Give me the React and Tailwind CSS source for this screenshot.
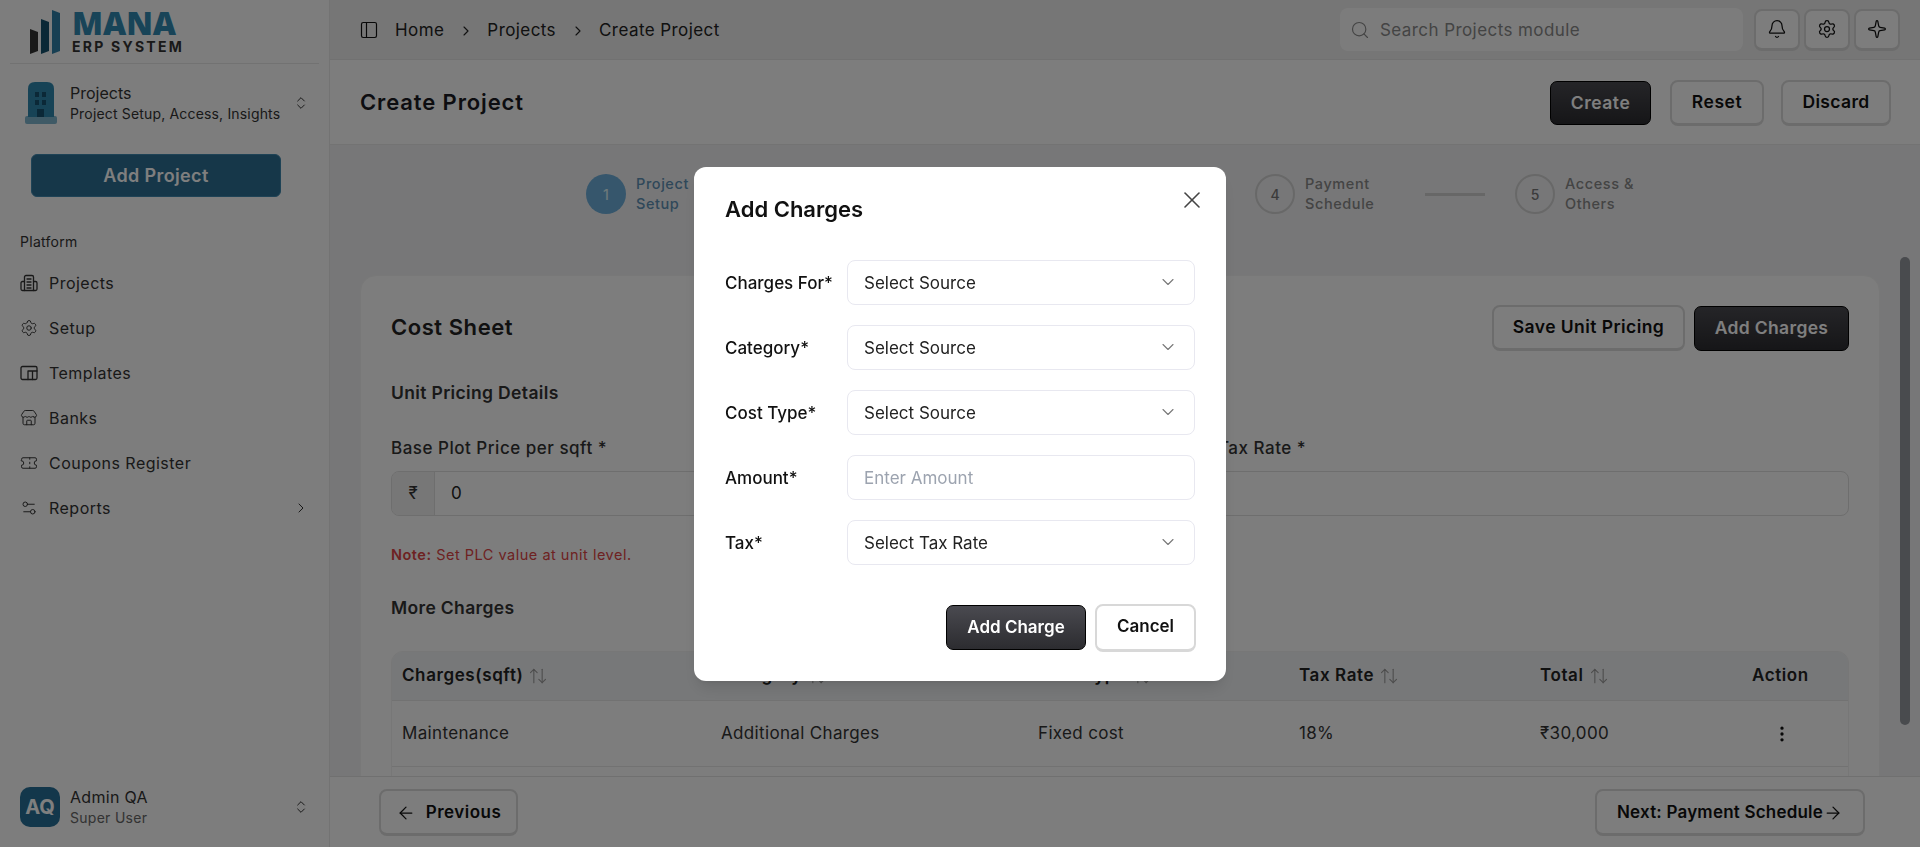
import React from "react";
import {
  PanelLeft, ChevronRight, Search, Bell, Settings, Sparkle, Store, Ticket, Settings2,
  ChevronsUpDown, ArrowLeft, ArrowRight, ArrowUpDown, EllipsisVertical, X, ChevronDown,
} from "lucide-react";

const ProjIcon = (p) => (
  <svg width="18" height="18" viewBox="0 0 18 18" fill="none" stroke="currentColor" strokeWidth="1.2" strokeLinecap="round" strokeLinejoin="round" {...p}>
    <path d="M4.5 16.5V3a1.5 1.5 0 0 1 1.5-1.5h6A1.5 1.5 0 0 1 13.5 3v13.5z" />
    <path d="M4.5 7.5H2.5A1.5 1.5 0 0 0 1 9v6a1.5 1.5 0 0 0 1.5 1.5h2M13.5 7.5h2A1.5 1.5 0 0 1 17 9v6a1.5 1.5 0 0 1-1.5 1.5h-2" />
    <path d="M7 5h4M7 8h4M7 11h4M7 14h4" />
  </svg>
);
const TemplateIcon = (p) => (
  <svg width="18" height="18" viewBox="0 0 18 18" fill="none" stroke="currentColor" strokeWidth="1.1" strokeLinecap="round" strokeLinejoin="round" {...p}>
    <rect x="1" y="2.5" width="16" height="13" rx="1.5" />
    <path d="M8 15.5V7h9M12.5 7v8.5" />
  </svg>
);

const NAV = [
  [ProjIcon, "Projects"],
  [Settings, "Setup"],
  [TemplateIcon, "Templates"],
  [Store, "Banks"],
  [Ticket, "Coupons Register"],
  [Settings2, "Reports"],
];

function Sidebar() {
  return (
    <aside className="w-[330px] shrink-0 h-full flex flex-col bg-[#fafafa] border-r border-[#e6e6e6]">
      <div className="mx-[10px] h-[64px] shrink-0 border-b border-[#e4e4e4] flex items-center pl-[20px]">
        <svg width="32" height="46" viewBox="0 0 32 46" className="shrink-0 mt-[2px]">
          <polygon points="0,19 8,22 8,41 0,44" fill="#333333" />
          <polygon points="11,9 19,12 19,41 11,44" fill="#14506c" />
          <polygon points="22,0 30,3 30,41 22,44" fill="#2f7ea6" />
        </svg>
        <div className="flex flex-col ml-[10px] mt-[1px]">
          <span className="text-[32px] leading-[25px] font-black text-[#3088b0] font-['Open_Sans',sans-serif]">MANA</span>
          <span className="text-[14px] leading-[14px] font-bold text-[#333333] tracking-[0.16em] mt-[5px]">ERP SYSTEM</span>
        </div>
      </div>

      <div className="flex items-center h-[64px] mt-[7px] pl-[24px] pr-[20px] shrink-0">
        <svg width="34" height="44" viewBox="0 0 34 44" className="shrink-0">
          <rect x="1" y="35" width="32" height="8" rx="2" fill="#7fb4cc" />
          <path d="M4 36V8q0-7 7-7h12q7 0 7 7v28z" fill="#2f86ac" />
          <g fill="#16506e">
            <rect x="11" y="11" width="4" height="5" />
            <rect x="18" y="11" width="4" height="5" />
            <rect x="11" y="19" width="4" height="5" />
            <rect x="18" y="19" width="4" height="5" />
            <rect x="13" y="28" width="7" height="8" />
          </g>
        </svg>
        <div className="ml-[12px] flex-1 flex flex-col">
          <span className="text-[16px] leading-[20px] text-[#333]">Projects</span>
          <span className="text-[14px] leading-[21px] text-[#333] tracking-[0.012em]">Project Setup, Access, Insights</span>
        </div>
        <ChevronsUpDown size={16} strokeWidth={1.5} className="text-[#333]" />
      </div>

      <button className="ml-[31px] w-[250px] mt-[19px] h-[43px] shrink-0 rounded-[6px] bg-[#2c6e92] border border-[#3f86ac] text-white font-semibold text-[18px] tracking-[0.02em]">
        Add Project
      </button>

      <div className="mt-[35px] pl-[20px] text-[14px] leading-[20px] text-[#333] tracking-[0.02em]">Platform</div>
      <nav className="mt-[8px] flex flex-col">
        {NAV.map(([I, t]) => (
          <div key={t} className="h-[45px] flex items-center pl-[20px] pr-[20px] text-[#333]">
            <I size={18} strokeWidth={1.3} className="shrink-0" />
            <span className="ml-[11px] flex-1 text-[16px] tracking-[0.03em]">{t}</span>
            {t === "Reports" && <ChevronRight size={16} strokeWidth={1.5} />}
          </div>
        ))}
      </nav>

      <div className="mt-auto h-[60px] mb-[10px] flex items-center pl-[20px] pr-[20px]">
        <div className="w-[40px] h-[40px] rounded-[10px] bg-[#276f96] text-white flex items-center justify-center font-bold text-[20px] leading-none">AQ</div>
        <div className="ml-[10px] flex-1 flex flex-col">
          <span className="text-[16px] leading-[21px] text-[#333] tracking-[0.02em]">Admin QA</span>
          <span className="text-[14px] leading-[20px] text-[#666] tracking-[0.02em]">Super User</span>
        </div>
        <ChevronsUpDown size={16} strokeWidth={1.5} className="text-[#333]" />
      </div>
    </aside>
  );
}

const btnLight = "rounded-[8px] border-2 border-[#d8d8d8] bg-[#fbfbfb] border-b-[3px] font-semibold text-[#111] flex items-center justify-center";
const btnDark = "rounded-[7px] bg-gradient-to-b from-[#4a4a50] to-[#2c2c30] border border-black text-white font-semibold flex items-center justify-center";

function Header() {
  return (
    <header className="h-[60px] shrink-0 bg-[#ececec] border-b border-[#e2e2e2] flex items-center pl-[29px] pr-[20px]">
      <PanelLeft size={20} strokeWidth={1.4} className="text-[#111]" />
      <div className="flex items-center ml-[16px] pt-[2px] text-[17px] text-[#222] tracking-[0.025em]">
        <span>Home</span>
        <ChevronRight size={16} strokeWidth={1.7} className="mx-[13.5px]" />
        <span>Projects</span>
        <ChevronRight size={16} strokeWidth={1.7} className="mx-[13.5px]" />
        <span>Create Project</span>
      </div>
      <div className="ml-auto w-[403px] h-[43px] rounded-[8px] bg-[#f9f9f9] flex items-center pl-[10px] text-[#888] text-[17px] tracking-[0.025em]">
        <Search size={20} strokeWidth={1.4} />
        <span className="ml-[10px] pt-[2px]">Search Projects module</span>
      </div>
      <div className="ml-[11px] flex gap-[4px]">
        {[Bell, Settings, Sparkle].map((I, i) => (
          <div key={i} className={`w-[46px] h-[42px] ${btnLight}`}>
            <I size={20} strokeWidth={1.5} />
          </div>
        ))}
      </div>
    </header>
  );
}

function TitleBar() {
  return (
    <div className="h-[85px] shrink-0 bg-[#fafafa] border-b border-[#e6e6e6] flex items-center pl-[30px] pr-[29px]">
      <h1 className="text-[22px] font-semibold text-[#1a1a22] tracking-[0.04em]">Create Project</h1>
      <div className="ml-auto flex items-center pt-[2px]">
        <button className={`w-[101px] h-[44px] text-[17.5px] tracking-[0.03em] ${btnDark}`}>Create</button>
        <button className={`ml-[19px] w-[94px] h-[46px] text-[17.5px] tracking-[0.03em] ${btnLight}`}>Reset</button>
        <button className={`ml-[17px] w-[110px] h-[46px] text-[17.5px] tracking-[0.02em] ${btnLight}`}>Discard</button>
      </div>
    </div>
  );
}

const STEPS = [
  ["1", "Project", "Setup", "w-[100px]", true],
  ["2", "Unit", "Pricing", "w-[53px]", false],
  ["3", "Cost", "Sheet", "w-[53px]", false],
  ["4", "Payment", "Schedule", "w-[90px]", false],
  ["5", "Access &", "Others", "w-[90px]", false],
];
const LINE = ["ml-[20px] mr-[21px]", "ml-[20px] mr-[21px]", "ml-[20px] mr-[31px]", "ml-[30px] mr-[30px]"];

function Stepper() {
  return (
    <div className="flex items-center h-[40px] mt-[29px] pl-[256px]">
      {STEPS.map(([n, a, b, w, active], i) => (
        <React.Fragment key={n}>
          <div className={`w-[40px] h-[40px] rounded-full shrink-0 flex items-center justify-center text-[14px] font-medium ${active ? "bg-[#6cacd8] text-[#d8f0f4]" : "border-2 border-[#d0d0d0] text-[#777]"}`}>{n}</div>
          <div className={`ml-[10px] shrink-0 text-[14.5px] leading-[20px] font-medium tracking-[0.04em] ${w} ${active ? "text-[#5e90b4]" : "text-[#888]"}`}>
            <div>{a}</div>
            <div>{b}</div>
          </div>
          {i < 4 && <div className={`h-[3px] w-[60px] bg-[#cfcfcf] shrink-0 ${LINE[i]}`} />}
        </React.Fragment>
      ))}
    </div>
  );
}

const COLS = "grid grid-cols-[319px_317px_261px_241px_212px_1fr]";
function Head({ children, sort = true }) {
  return (
    <div className="flex items-center gap-[5px] text-[17px] font-semibold text-[#222] tracking-[0.035em]">
      {children}
      {sort && <ArrowUpDown size={20} strokeWidth={1.3} className="text-[#999]" />}
    </div>
  );
}

function Card() {
  return (
    <section className="ml-[30px] mr-[40px] mt-[61px] bg-[#fafafa] border border-[#f0f0f0] rounded-[16px] px-[30px] pt-[28px] pb-[30px]">
      <div className="flex items-center">
        <h2 className="text-[22px] font-semibold text-[#222] tracking-[0.025em]">Cost Sheet</h2>
        <div className="ml-auto flex items-center gap-[9px] pt-[1px]">
          <button className={`w-[193px] h-[46px] text-[17.5px] tracking-[0.025em] ${btnLight}`}>Save Unit Pricing</button>
          <button className={`w-[155px] h-[45px] text-[17.5px] tracking-[0.02em] ${btnDark}`}>Add Charges</button>
        </div>
      </div>
      <h3 className="mt-[30px] text-[17.5px] leading-[24px] font-semibold text-[#333] tracking-[0.02em]">Unit Pricing Details</h3>
      <div className="mt-[31px] grid grid-cols-[811px_1fr] gap-x-[16px]">
        <div>
          <label className="block text-[17px] leading-[24px] font-medium text-[#333] tracking-[0.03em]">Base Plot Price per sqft *</label>
          <div className="mt-[11px] flex h-[45px] border border-[#ddd] rounded-[8px] overflow-hidden bg-[#fafafa]">
            <div className="w-[43px] shrink-0 bg-[#eee] border-r border-[#ddd] flex items-center justify-center text-[17px] text-[#333]">₹</div>
            <div className="pl-[16px] flex items-center text-[17px] text-[#222]">0</div>
          </div>
        </div>
        <div>
          <label className="block text-[17px] leading-[24px] font-medium text-[#333] tracking-[0.03em]">Tax Rate *</label>
          <div className="mt-[11px] h-[45px] border border-[#ddd] rounded-[8px] bg-[#fafafa]" />
        </div>
      </div>
      <p className="mt-[29px] text-[14.5px] leading-[20px] text-[#d44] tracking-[0.035em]"><span className="font-semibold">Note:</span> Set PLC value at unit level.</p>
      <h3 className="mt-[31px] text-[17.5px] leading-[24px] font-semibold text-[#333] tracking-[0.02em]">More Charges</h3>
      <div className="mt-[31px] rounded-[12px] border border-[#eee] overflow-hidden">
        <div className={`${COLS} h-[49px] items-center bg-[#eef0f2] border-b border-[#e4e4e4] pl-[10px]`}>
          <Head>Charges(sqft)</Head>
          <Head>Category</Head>
          <Head>Cost Type</Head>
          <Head>Tax Rate</Head>
          <Head>Total</Head>
          <Head sort={false}>Action</Head>
        </div>
        {[["Maintenance", "Additional Charges", "Fixed cost", "18%", "₹30,000"], ["Club House", "Additional Charges", "Fixed cost", "18%", "₹50,000"]].map((r) => (
          <div key={r[0]} className={`${COLS} h-[66px] items-center border-b border-[#e4e4e4] pl-[10px] text-[17px] text-[#333] tracking-[0.02em]`}>
            {r.map((c) => <div key={c}>{c}</div>)}
            <div className="pl-[20px]"><EllipsisVertical size={20} strokeWidth={2} className="text-[#111]" /></div>
          </div>
        ))}
      </div>
    </section>
  );
}

function Field({ label, placeholder, select = true }) {
  return (
    <div className="flex items-center h-[45px]">
      <label className="w-[122px] shrink-0 pt-[3px] text-[17px] font-medium text-[#111]">{label}</label>
      <div className="flex-1 h-[45px] rounded-[8px] border border-[#e8e8f0] bg-white flex items-center pl-[16px] pr-[16px]">
        <span className={`flex-1 pt-[3px] text-[17px] ${select ? "text-[#222]" : "text-[#9ca3af]"}`}>{placeholder}</span>
        {select && <ChevronDown size={20} strokeWidth={1.3} className="text-[#777]" />}
      </div>
    </div>
  );
}

function Modal() {
  return (
    <div className="fixed inset-0 bg-black/50 flex items-center justify-center">
      <div className="relative w-[532px] h-[514px] bg-white rounded-[12px] shadow-lg pl-[31px] pr-[31px] pt-[27px] flex flex-col">
        <h2 className="text-[22px] leading-[30px] font-semibold text-[#111]">Add Charges</h2>
        <button className="absolute right-[20px] top-[19px] text-[#444]"><X size={28} strokeWidth={1.4} /></button>
        <div className="mt-[36px] flex flex-col gap-[20px]">
          <Field label="Charges For*" placeholder="Select Source" />
          <Field label="Category*" placeholder="Select Source" />
          <Field label="Cost Type*" placeholder="Select Source" />
          <Field label="Amount*" placeholder="Enter Amount" select={false} />
          <Field label="Tax*" placeholder="Select Tax Rate" />
        </div>
        <div className="mt-[39px] flex justify-end items-center gap-[9px] mr-[-1px]">
          <button className={`w-[140px] h-[45px] pt-[1px] text-[17px] ${btnDark}`}>Add Charge</button>
          <button className={`w-[101px] h-[48px] text-[17px] !bg-white ${btnLight}`}>Cancel</button>
        </div>
      </div>
    </div>
  );
}

export default function App() {
  return (
    <div className="relative w-full h-screen overflow-hidden flex font-['Inter',sans-serif] bg-[#f0f0f0]">
      <Sidebar />
      <main className="flex-1 min-w-0 h-full flex flex-col">
        <Header />
        <TitleBar />
        <div className="relative flex-1 min-h-0 overflow-hidden bg-[#eeeff0]">
          <Stepper />
          <Card />
          <div className="absolute right-[10px] top-[112px] w-[10px] h-[468px] rounded-full bg-[#93969c]" />
        </div>
        <footer className="h-[71px] shrink-0 bg-[#fafafa] border-t border-[#e0e0e0] flex items-center justify-between pl-[49px] pr-[55px]">
          <button className={`w-[139px] h-[47px] gap-[10px] pt-[2px] text-[17px] tracking-[0.03em] ${btnLight}`}><ArrowLeft size={20} strokeWidth={1.5} />Previous</button>
          <button className={`w-[270px] h-[47px] pt-[2px] text-[17px] tracking-[0.012em] ${btnLight}`}>Next: Payment Schedule<ArrowRight size={20} strokeWidth={1.5} /></button>
        </footer>
      </main>
      <Modal />
    </div>
  );
}
